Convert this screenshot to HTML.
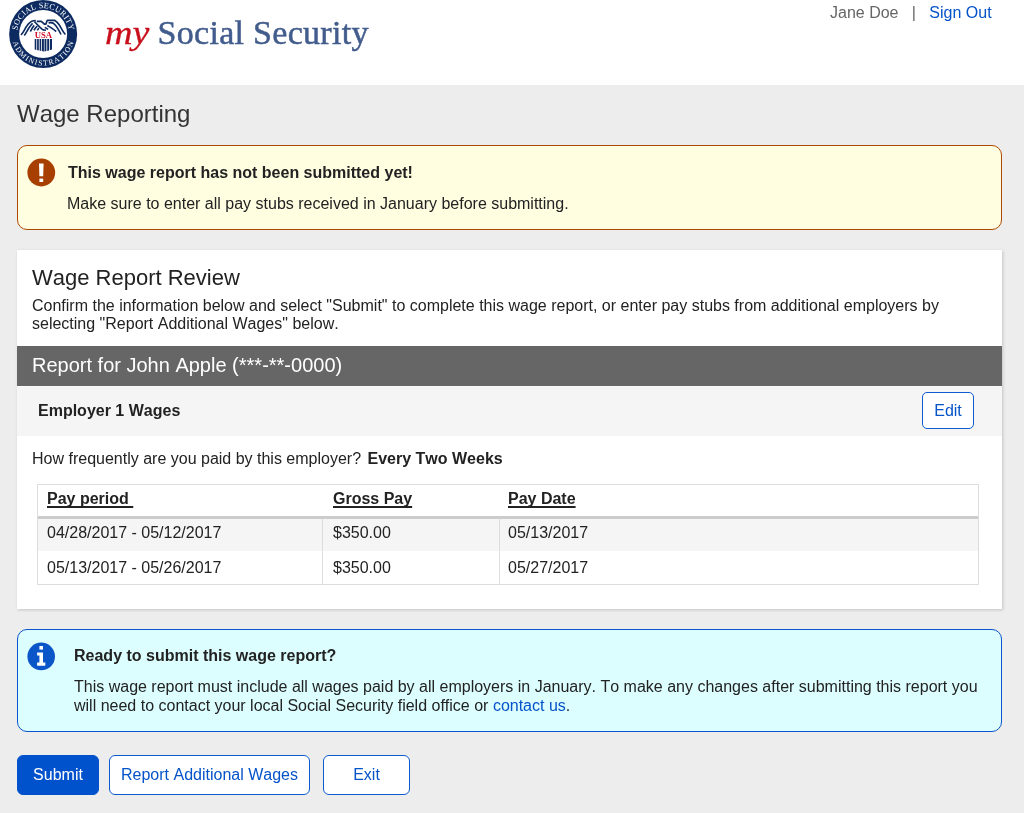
<!DOCTYPE html>
<html><head><meta charset="utf-8">
<style>
*{box-sizing:border-box}
html,body{margin:0;padding:0}
body{font-kerning:none;width:1024px;height:813px;overflow:hidden;background:#ededed;font-family:"Liberation Sans",sans-serif;font-size:16px;color:#222;position:relative}
.abs{position:absolute;white-space:nowrap}
#hdr{position:absolute;left:0;top:0;width:1024px;height:85px;background:#fff}
#logo{position:absolute;left:0;top:0;width:90px;height:75px}
#brand{position:absolute;left:0;top:11px;font-family:"Liberation Serif",serif;font-size:34px;line-height:44px;white-space:nowrap;-webkit-text-stroke:0.5px}
#brand .my{position:absolute;left:105px;top:0;color:#c8101c;font-style:italic;display:inline-block;transform-origin:0 0;transform:scaleX(1.12);-webkit-text-stroke:0.3px}
#brand .ss{position:absolute;left:157.5px;top:0;color:#425c8c;letter-spacing:0.3px}
#user{position:absolute;top:4px;left:830px;line-height:18px;white-space:nowrap;color:#666}
#user a{color:#0553c9;text-decoration:none}
h1{position:absolute;left:17px;top:99px;margin:0;font-size:24px;font-weight:400;line-height:30px;color:#333}
.alert{position:absolute;left:17px;width:985px;border-radius:10px;border:1px solid}
#warn{top:145px;height:85px;background:#fffee1;border-color:#ad4800}
#info{top:629px;height:103px;background:#dcfeff;border-color:#0953cc}
.ic{position:absolute;left:9px;width:29px;height:29px}
#card{position:absolute;left:17px;top:250px;width:985px;height:359px;background:#fff;box-shadow:1px 1px 3px rgba(0,0,0,0.18)}
#card h2{position:absolute;left:15px;top:14px;margin:0;font-size:22px;font-weight:400;line-height:28px;color:#222}
#card p{position:absolute;left:15px;top:47px;margin:0;line-height:18px;width:950px}
#bar{position:absolute;left:0;top:96px;width:985px;height:40px;background:#666;color:#fff;font-size:20px;line-height:38px;padding-left:15px}
#emp{position:absolute;left:0;top:136px;width:985px;height:50px;background:#f5f5f5;border-top:1px solid #fafafa}
#emp b{position:absolute;left:21px;top:15px;line-height:18px}
#edit{position:absolute;left:905px;top:5px;width:52px;height:37px;border:1px solid #0c5bd1;border-radius:5px;background:#fff;color:#0553c9;text-align:center;line-height:35px}
#freq{position:absolute;left:15px;top:200px;line-height:18px;white-space:nowrap}
table{position:absolute;left:20px;top:234px;width:942px;border-collapse:separate;border-spacing:0;border:1px solid #ddd}
th{text-align:left;font-weight:700;height:34px;padding:5px 0 0 9px;border-bottom:3px solid #ccc;vertical-align:top;line-height:18px}
th u{text-decoration:underline;text-decoration-thickness:2px;text-underline-offset:2px;text-decoration-skip-ink:none}
td{height:32px;padding:5px 0 0 9px;vertical-align:top;line-height:18px}
tr.r2 td{height:33px;padding-top:8px}
td+td{border-left:1px solid #ddd}
tr.odd td{background:#f5f5f5}
.btn{position:absolute;top:755px;height:40px;border-radius:6px;border:1px solid #0c5bd1;text-align:center;line-height:38px;color:#0553c9;background:#fff;white-space:nowrap}
</style></head><body><div id="root" style="position:absolute;left:0;top:0;width:1024px;height:813px;will-change:transform">
<div id="hdr">
<svg id="logo" width="90" height="75" viewBox="0 0 90 75">
<defs>
<path id="arcT" d="M 17.15 34 A 26 26 0 0 1 69.15 34"/>
<path id="arcB" d="M 11.65 34 A 31.5 31.5 0 0 0 74.65 34"/>
</defs>
<circle cx="43.15" cy="34" r="34" fill="#0d2b61"/>
<circle cx="43.15" cy="34" r="24" fill="#fff"/>
<text font-family="Liberation Serif" font-size="8.2" fill="#fff" text-anchor="middle"><textPath href="#arcT" startOffset="50%" textLength="74" lengthAdjust="spacing">SOCIAL SECURITY</textPath></text>
<text font-family="Liberation Serif" font-size="7.6" fill="#fff" text-anchor="middle"><textPath href="#arcB" startOffset="50%" textLength="82" lengthAdjust="spacing">ADMINISTRATION</textPath></text>
<g fill="none" stroke="#0d2b61" stroke-width="1.65" stroke-linecap="butt" stroke-linejoin="round">
<path d="M21 35 C23.5 32.5 25 28.5 26.8 26 C28.8 23 31 21 33.5 20.7 L35.8 20.6"/>
<path d="M24.3 35.5 C26 33.5 27.5 30 29.2 27.6 C30.2 26 31.3 24.5 32.6 23.3"/>
<path d="M30.4 31.5 C31.4 29.5 32.6 27 34.2 25.4"/>
<path d="M34 30.4 C34.8 28.8 36 27.2 37.3 26.1"/>
<path d="M37.3 30.4 C37.8 29.6 38.3 28.8 39 28.2"/>
<path d="M34.4 21.6 C37 24 40 28 43.1 29.9 L46 30.3"/>
<path d="M36.8 21.3 H41.3 L44.4 24.1 H45.8 L47.3 20.3 H54.5 C56.5 21.5 57.8 22.8 58.8 24.3 C60.3 26.5 61.5 28.8 62.6 30.7 C63.5 32.3 64.4 33.6 65.4 34.5"/>
<path d="M48.6 23.1 C50.2 22.5 51.8 22.6 53.2 23.1 C55 24.5 56.4 26.3 57.5 28.2 C58.9 30.5 60 32.5 61 34.5"/>
<path d="M47.3 25.4 C48.8 26.2 50.4 27.2 51.7 28.2 C53.4 29.4 54.8 30.4 56.2 31.5"/>
<path d="M44.8 27.4 C45.9 28 47 28.7 48.1 29.4"/>
</g>
<text x="43.4" y="38" font-family="Liberation Serif" font-weight="700" font-size="8.4" fill="#d0112b" text-anchor="middle" textLength="17.4" lengthAdjust="spacingAndGlyphs">USA</text>
<g fill="#0d2b61">
<path d="M34.7 38.9 H52 V49.6 L48 50.8 L44 51.6 L40 50.8 L34.7 49.6 Z"/>
</g>
<g fill="#fff">
<rect x="36.3" y="38.9" width="0.8" height="13"/>
<rect x="38.8" y="38.9" width="0.8" height="13"/>
<rect x="41.2" y="38.9" width="0.8" height="13"/>
<rect x="43.9" y="38.9" width="0.6" height="13"/>
<rect x="46.4" y="38.9" width="0.8" height="13"/>
<rect x="49" y="38.9" width="0.8" height="13"/>
</g>
</svg>
<div id="brand"><span class="my">my</span><span class="ss">Social Security</span></div>
<div id="user">Jane Doe &nbsp; | &nbsp; <a>Sign Out</a></div>
</div>
<h1>Wage Reporting</h1>
<div id="warn" class="alert">
<svg class="ic" style="top:12px" viewBox="0 0 29 29"><circle cx="14.3" cy="14.5" r="13.9" fill="#a63f00"/><path d="M12 5.5 H16.6 L16.2 18.2 H12.4 Z" fill="#fff"/><rect x="12.4" y="20.6" width="3.8" height="3.4" fill="#fff"/></svg>
<div class="abs" style="left:50px;top:18px;font-weight:700;line-height:18px">This wage report has not been submitted yet!</div>
<div class="abs" style="left:49px;top:49px;line-height:18px">Make sure to enter all pay stubs received in January before submitting.</div>
</div>
<div id="card">
<h2>Wage Report Review</h2>
<p>Confirm the information below and select "Submit" to complete this wage report, or enter pay stubs from additional employers by selecting "Report Additional Wages" below.</p>
<div id="bar">Report for John Apple (***-**-0000)</div>
<div id="emp"><b>Employer 1 Wages</b><div id="edit">Edit</div></div>
<div id="freq">How frequently are you paid by this employer? <b style="margin-left:2px">Every Two Weeks</b></div>
<table>
<tr><th style="width:284px"><u>Pay period&nbsp;</u></th><th style="width:177px;padding-left:11px"><u>Gross Pay</u></th><th><u>Pay Date</u></th></tr>
<tr class="odd"><td>04/28/2017 - 05/12/2017</td><td style="padding-left:10px">$350.00</td><td style="padding-left:8px">05/13/2017</td></tr>
<tr class="r2"><td>05/13/2017 - 05/26/2017</td><td style="padding-left:10px">$350.00</td><td style="padding-left:8px">05/27/2017</td></tr>
</table>
</div>
<div id="info" class="alert">
<svg class="ic" style="top:12px" viewBox="0 0 29 29"><circle cx="14.2" cy="14.4" r="13.8" fill="#0a56c9"/><rect x="12.4" y="4" width="3.6" height="3.6" fill="#fff"/><path d="M10.1 10.5 H16 V20.5 H18.3 V23.8 H10.1 V20.5 H12.4 V13.6 H10.1 Z" fill="#fff"/></svg>
<div class="abs" style="left:56px;top:17px;font-weight:700;line-height:18px">Ready to submit this wage report?</div>
<div class="abs" style="left:56px;top:47px;line-height:19px;white-space:normal;width:920px">This wage report must include all wages paid by all employers in January. To make any changes after submitting this report you will need to contact your local Social Security field office or <a style="color:#0553c9;text-decoration:none">contact us</a>.</div>
</div>
<div class="btn" style="left:17px;width:82px;background:#0052cc;color:#fff;border-color:#0052cc">Submit</div>
<div class="btn" style="left:109px;width:201px">Report Additional Wages</div>
<div class="btn" style="left:323px;width:87px">Exit</div>
</div></body></html>
